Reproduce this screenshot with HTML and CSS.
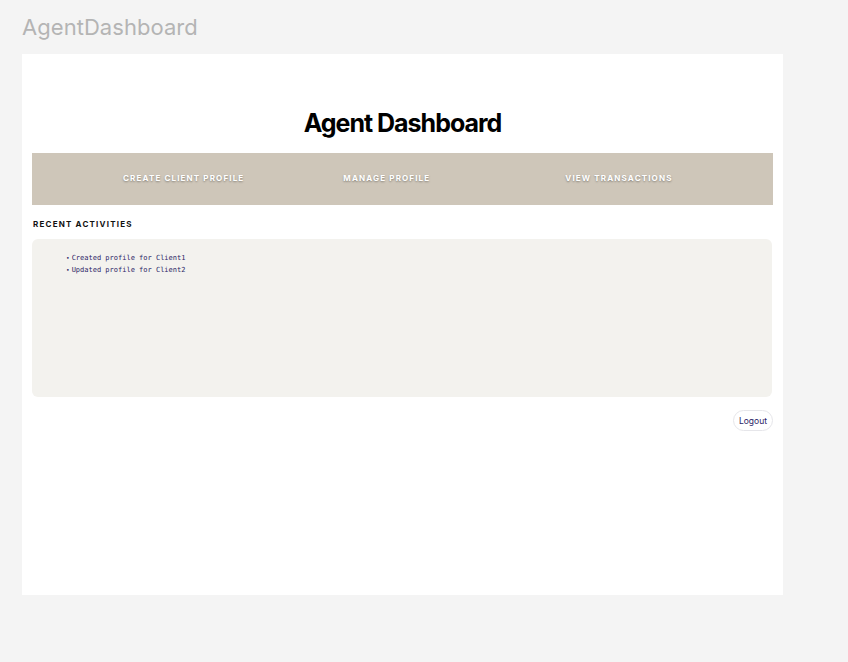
FILE: index.html
```html
<!DOCTYPE html>
<html>
<head>
<meta charset="utf-8">
<link rel="stylesheet" href="styles.css">
</head>
<body>
<div class="app-title">AgentDashboard</div>
<div class="panel">
  <h1 class="heading">Agent Dashboard</h1>
  <nav class="nav">
    <a class="nav-item nav-create">CREATE CLIENT PROFILE</a>
    <a class="nav-item nav-manage">MANAGE PROFILE</a>
    <a class="nav-item nav-view">VIEW TRANSACTIONS</a>
  </nav>
  <h2 class="section-title">RECENT ACTIVITIES</h2>
  <div class="activities">
    <ul class="activity-list">
      <li>Created profile for Client1</li>
      <li>Updated profile for Client2</li>
    </ul>
  </div>
  <div class="actions">
    <button class="logout">Logout</button>
  </div>
</div>
</body>
</html>
```
FILE: styles.css
```css
* { box-sizing: border-box; }
html, body { margin: 0; padding: 0; }
body {
  background: #f4f4f4;
  font-family: Inter, "Noto Sans", sans-serif;
  width: 848px;
  height: 662px;
  overflow: hidden;
}
.app-title {
  padding: 13px 0 0 22px;
  height: 54px;
  font-size: 22px;
  color: #b4b4b4;
  letter-spacing: 0.05px;
  line-height: 28px;
}
.panel {
  margin-left: 22px;
  width: 761px;
  height: 541px;
  background: #fff;
  padding: 0 10px;
}
.heading {
  margin: 0;
  padding-top: 53px;
  height: 99px;
  text-align: center;
  font-size: 25px;
  font-weight: 700;
  letter-spacing: -1px;
  line-height: 32px;
  color: #000;
}
.nav {
  display: flex;
  align-items: center;
  height: 52px;
  background: #cec6b9;
  padding: 0 0 2px 91px;
}
.nav-item {
  color: #fff;
  font-size: 8px;
  font-weight: 700;
  letter-spacing: 1.15px;
  text-shadow: 0 1px 2px rgba(0,0,0,0.35);
  white-space: nowrap;
}
.nav-manage { margin-left: 99px; }
.nav-view { margin-left: 135px; }
.section-title {
  margin: 0;
  padding: 14px 0 0 1px;
  height: 34px;
  font-size: 8px;
  font-weight: 700;
  letter-spacing: 1.2px;
  line-height: 10px;
  color: #111;
}
.activities {
  width: 740px;
  height: 158px;
  background: #f3f2ee;
  border-radius: 6px;
  padding: 13px 0 0 34px;
}
.activity-list {
  margin: 0;
  padding: 0;
  list-style: none;
  font-family: "DejaVu Sans Mono", "Liberation Mono", monospace;
  font-size: 7px;
  line-height: 12px;
  color: #2b2466;
}
.activity-list li::before {
  content: "•";
  margin-right: 2px;
  font-size: 6px;
}
.actions {
  display: flex;
  justify-content: flex-end;
  padding-top: 13px;
  width: 741px;
}
.logout {
  height: 21px;
  padding: 0 5px;
  border: 1px solid #e6e6ea;
  border-radius: 11px;
  background: #fff;
  font-family: Inter, sans-serif;
  font-size: 8.5px;
  color: #2b2466;
}
```
